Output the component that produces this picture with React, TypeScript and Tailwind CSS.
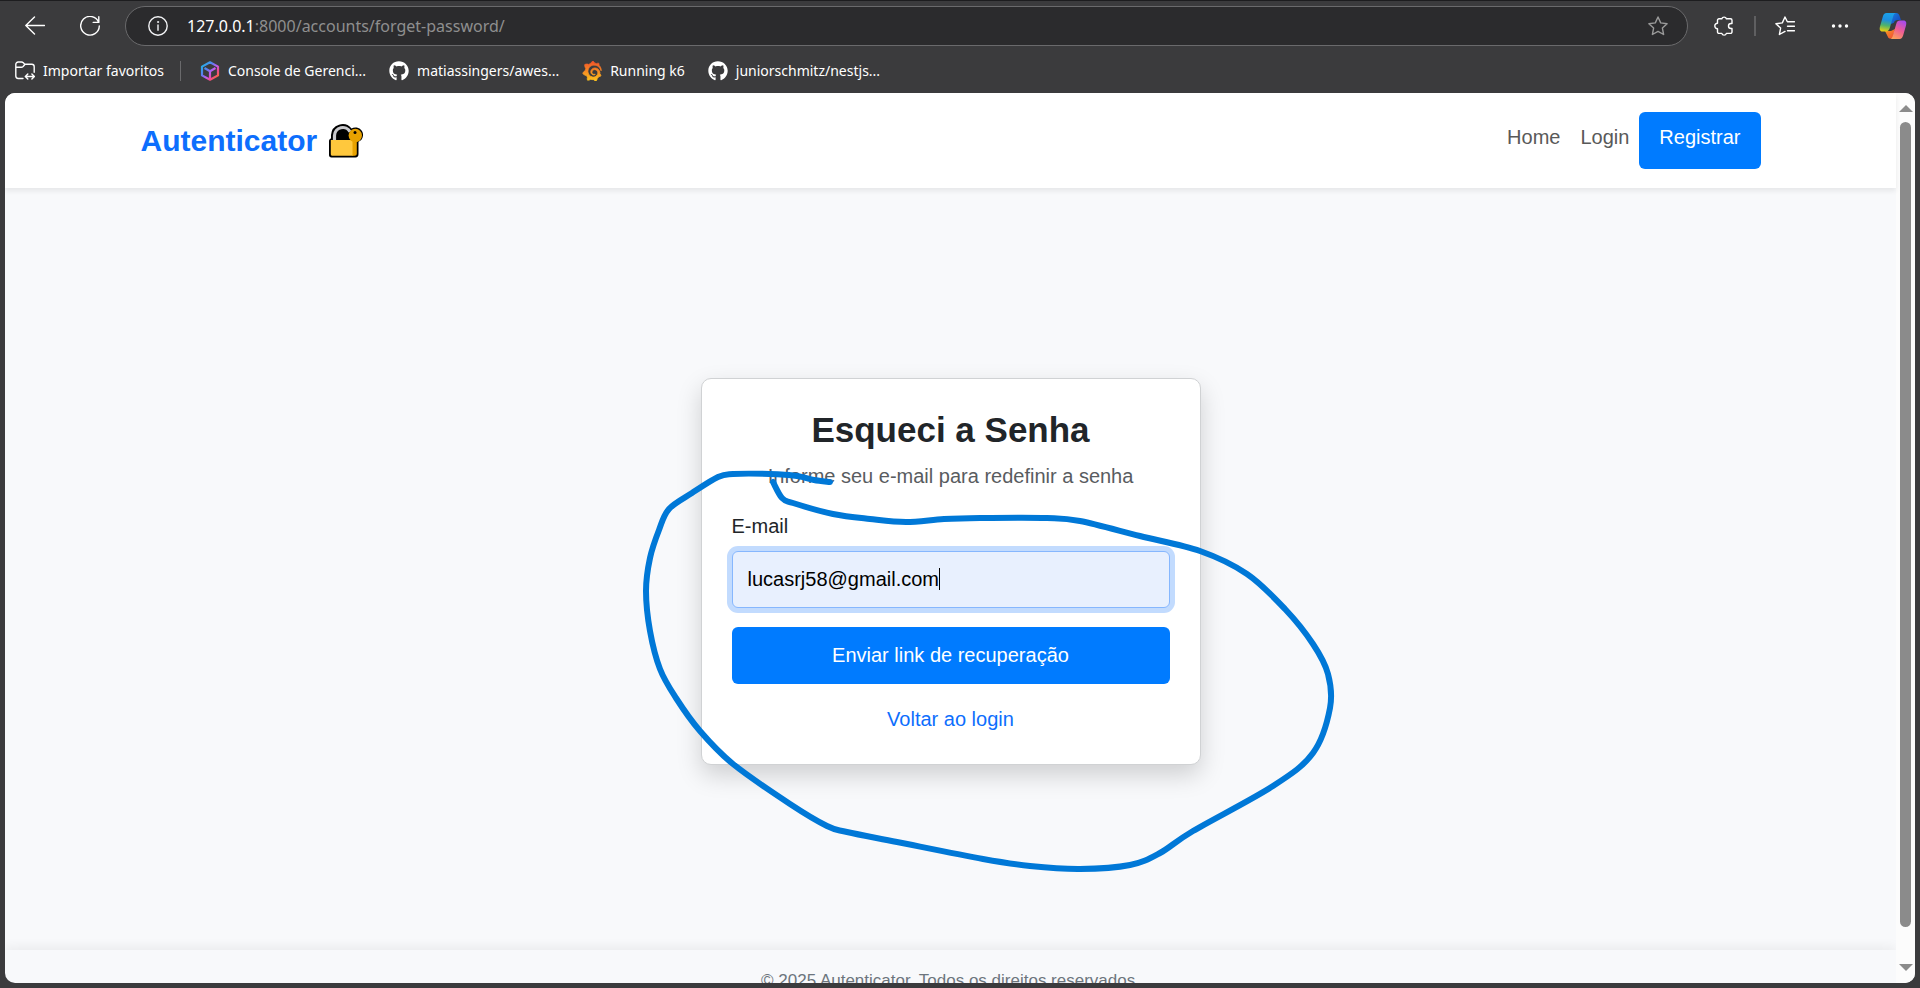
import React, { useState } from "react";
import { FaGithub } from "react-icons/fa";
import { SiGrafana } from "react-icons/si";

type Point = [number, number];

const strokePoints: Point[] = [
  [830, 481], [814, 479], [797, 475], [770, 473], [733, 473], [718, 476], [692, 492], [669, 508],
  [659, 529], [650, 557], [646, 590], [650, 630], [660, 668], [676, 697], [700, 730], [733, 763],
  [790, 803], [827, 825], [847, 831], [897, 841], [983, 858], [1030, 865], [1080, 868], [1130, 864],
  [1160, 852], [1193, 830], [1273, 785], [1313, 752], [1330, 707], [1328, 673], [1313, 643],
  [1285, 608], [1247, 573], [1200, 550], [1140, 535], [1080, 520], [1047, 517], [980, 517],
  [944, 518], [906, 521], [870, 518], [833, 513], [793, 502], [782, 497], [773, 481],
];

function smoothPath(points: Point[]): string {
  let d = `M${points[0][0]} ${points[0][1]}`;
  for (let i = 0; i < points.length - 1; i++) {
    const p0 = points[Math.max(i - 1, 0)];
    const p1 = points[i];
    const p2 = points[i + 1];
    const p3 = points[Math.min(i + 2, points.length - 1)];
    d += `C${p1[0] + (p2[0] - p0[0]) / 6} ${p1[1] + (p2[1] - p0[1]) / 6} ${p2[0] - (p3[0] - p1[0]) / 6} ${
      p2[1] - (p3[1] - p1[1]) / 6
    } ${p2[0]} ${p2[1]}`;
  }
  return d;
}

const line = {
  fill: "none",
  stroke: "currentColor",
  strokeWidth: 1.4,
  strokeLinecap: "round" as const,
  strokeLinejoin: "round" as const,
};

function BackIcon() {
  return (
    <svg className="size-5" viewBox="0 0 20 20" {...line}>
      <path d="M19.5 9.5H.8M9.5 1 .8 9.5l8.7 8.5" />
    </svg>
  );
}

function ReloadIcon() {
  return (
    <svg className="size-5" viewBox="0 0 20 20" {...line}>
      <path d="M18.6 6.2A9.3 9.3 0 1 0 19.3 10M18.8.8v5.6h-5.6" />
    </svg>
  );
}

function InfoIcon() {
  return (
    <svg className="size-5 text-gray-100" viewBox="0 0 20 20" {...line}>
      <circle cx="10" cy="10" r="9.2" />
      <path d="M10 9v5.2" />
      <circle cx="10" cy="6" r="0.6" fill="currentColor" strokeWidth="0.8" />
    </svg>
  );
}

function StarIcon() {
  return (
    <svg className="size-5" viewBox="0 0 20 20" {...line}>
      <path d="m10 1 2.7 5.9 6.4.8-4.7 4.4 1.2 6.4L10 15.4l-5.6 3.1 1.2-6.4L.9 7.7l6.4-.8z" />
    </svg>
  );
}

function PuzzleIcon() {
  return (
    <svg className="size-5" viewBox="0 0 20 20" {...line}>
      <path d="M7.800 2.800a2.400 2.400 0 0 1 4.600 0H16.500a1.500 1.500 0 0 1 1.500 1.500V7.500h-1a2.500 2.500 0 0 0 0 5h1v3.400a1.500 1.500 0 0 1-1.500 1.500h-4.100a2.400 2.400 0 0 1-4.600 0H5a1.500 1.500 0 0 1-1.500-1.500v-3.200a2.700 2.700 0 0 1 0-5.400v-3A1.500 1.500 0 0 1 5 2.800z" />
    </svg>
  );
}

function FavoritesIcon() {
  return (
    <svg className="size-5" viewBox="0 0 20 20" {...line}>
      <path d="M12.200 5.500 10 1 7.300 6.900l-6.400.8 4.700 4.400-1.200 6.400L10 15.400M12.500 5.800h7M12.500 10.300h7M12.500 14.800h7" />
    </svg>
  );
}

function MoreIcon() {
  return (
    <svg className="size-5" viewBox="0 0 20 20" fill="currentColor">
      <circle cx="3.500" cy="10" r="1.700" />
      <circle cx="10" cy="10" r="1.700" />
      <circle cx="16.500" cy="10" r="1.700" />
    </svg>
  );
}

function CopilotIcon() {
  return (
    <svg className="h-7 w-7" viewBox="0 0 28 28">
      <defs>
        <linearGradient id="cp-left" x1="0.300" y1="0" x2="0.150" y2="1">
          <stop offset="0" stopColor="#1aa0e8" />
          <stop offset="0.350" stopColor="#1d8ee0" />
          <stop offset="0.650" stopColor="#4fb36a" />
          <stop offset="1" stopColor="#f5d30a" />
        </linearGradient>
        <linearGradient id="cp-right" x1="0.800" y1="0" x2="0.300" y2="1">
          <stop offset="0" stopColor="#a44af0" />
          <stop offset="0.500" stopColor="#ee5c96" />
          <stop offset="1" stopColor="#fca05a" />
        </linearGradient>
        <linearGradient id="cp-top" x1="0" y1="0" x2="1" y2="1">
          <stop offset="0" stopColor="#1a7fe0" />
          <stop offset="1" stopColor="#1540b8" />
        </linearGradient>
        <linearGradient id="cp-bottom" x1="0" y1="0" x2="1" y2="1">
          <stop offset="0" stopColor="#f8a01c" />
          <stop offset="1" stopColor="#f0443c" />
        </linearGradient>
      </defs>
      <path fill="url(#cp-top)" d="M12 1h5.500c1.500 0 2.400.9 2.900 2.400L22 8h-3.500c-2 0-3 1-3.600 2.800L12 12z" />
      <path fill="url(#cp-bottom)" d="M6 19h6l4-2-2.500 9.500h-2c-1.600 0-2.500-1-3-2.600z" />
      <path
        fill="url(#cp-left)"
        d="M7.500 1H17c-1.500.3-2.300 1.500-2.800 3.300l-3.500 12C10.100 18.300 9 19.500 7 19.500H3.500C.7 19.500.3 17 1 14.500l2.800-9.800C4.500 2.300 5.500 1 7.500 1z"
      />
      <path
        fill="url(#cp-right)"
        d="M20.500 27H11c1.500-.3 2.300-1.500 2.800-3.300l3.500-12c.6-2 1.700-3.200 3.700-3.200h3.500c2.800 0 3.200 2.500 2.500 5l-2.800 9.800c-.7 2.400-1.700 3.700-3.700 3.700z"
      />
    </svg>
  );
}

function ImportIcon() {
  return (
    <svg className="size-5" viewBox="0 0 20 20" {...line}>
      <path d="M8 17.500H3.200A2.400 2.400 0 0 1 .8 15.100V3.400A2.400 2.400 0 0 1 3.200 1h3.300c.8 0 1.300.3 1.800.8l1.400 1.500h7.100a2.400 2.400 0 0 1 2.400 2.400v5.600M.8 6.300h5.500c.8 0 1.300-.3 1.800-.8l1.800-2M10.500 15.500h8.700M12.800 13l-2.500 2.500 2.500 2.500M16.900 13l2.500 2.500-2.500 2.500" />
    </svg>
  );
}

function CubeIcon() {
  return (
    <svg className="size-5" viewBox="0 0 20 20" fill="none" strokeWidth="2.200" strokeLinejoin="round">
      <defs>
        <linearGradient id="cube" x1="2" y1="3" x2="17" y2="17" gradientUnits="userSpaceOnUse">
          <stop offset="0" stopColor="#1cb8e8" />
          <stop offset="0.350" stopColor="#5b7df0" />
          <stop offset="0.600" stopColor="#c45af0" />
          <stop offset="0.800" stopColor="#f04a8a" />
          <stop offset="1" stopColor="#fb6a3c" />
        </linearGradient>
      </defs>
      <path stroke="url(#cube)" d="M10 1.300 18 5.600v8.800l-8 4.300-8-4.300V5.600zM4.500 7 10 10.200 15.500 7M10 10.200v8" />
    </svg>
  );
}

function GrafanaIcon() {
  return (
    <svg className="size-5" viewBox="0 0 20 20">
      <defs>
        <linearGradient id="grafana" x1="0" y1="0" x2="0" y2="1">
          <stop offset="0" stopColor="#f2502a" />
          <stop offset="1" stopColor="#fcc41c" />
        </linearGradient>
      </defs>
      <SiGrafana size={20} fill="url(#grafana)" stroke="url(#grafana)" strokeWidth="1" />
    </svg>
  );
}

function LockIcon() {
  return (
    <svg className="h-9 w-9" viewBox="0 0 36 36">
      <path d="M3 15.500V12a11.500 11.500 0 0 1 20.500-6.500c5-2.500 12 .5 11.500 7-.2 3-2 5.300-4.500 6.200V31c0 2-1 3.500-3 3.500H3.500C1.800 34.500 1 33.500 1 32V18c0-1.200.8-2.200 2-2.500z" />
      <path d="M6.500 17v-4.500a8.300 8.300 0 0 1 15.500-3.800" fill="none" stroke="#c9c9cc" strokeWidth="3.200" />
      <path d="M2.800 17h23v14c0 1-.6 1.800-1.600 1.800H4.400c-1 0-1.600-.8-1.600-1.800z" fill="#ffc83d" />
      <path d="M24.500 18h4.300v12.800c0 1.300-.8 2-2 2h-3.500c1 0 1.200-.8 1.200-1.800z" fill="#e8a200" />
      <circle cx="27.300" cy="12.500" r="6.700" fill="#e8a200" />
      <circle cx="27" cy="9.500" r="1.500" />
    </svg>
  );
}

const bookmarks = [
  { label: "Console de Gerenci...", icon: <CubeIcon /> },
  { label: "matiassingers/awes...", icon: <FaGithub size={20} /> },
  { label: "Running k6", icon: <GrafanaIcon /> },
  { label: "juniorschmitz/nestjs...", icon: <FaGithub size={20} /> },
];

function BrowserBar() {
  return (
    <header className="shrink-0 border-t border-[#1d1d1f] font-['Noto_Sans',sans-serif] text-white">
      <div className="flex items-center pt-[5px] pr-[13px] pl-[25px]">
        <button type="button" aria-label="Voltar" className="mr-[35px]">
          <BackIcon />
        </button>
        <button type="button" aria-label="Recarregar" className="mr-[25px]">
          <ReloadIcon />
        </button>
        <div className="mr-[26px] flex h-10 flex-1 items-center rounded-full border border-[#6a6a6c] bg-[#2b2b2d] pr-[19px] pl-[22px]">
          <InfoIcon />
          <a href="#url" className="ml-[19px] flex-1 text-base text-[#8f8f8f]">
            <span className="text-white">127.0.0.1</span>:8000/accounts/forget-password/
          </a>
          <button type="button" aria-label="Adicionar aos favoritos" className="text-[#9a9a9a]">
            <StarIcon />
          </button>
        </div>
        <button type="button" aria-label="Extensões" className="mr-5">
          <PuzzleIcon />
        </button>
        <span className="mr-[19px] h-5 w-[2px] bg-[#5f5f61]" />
        <button type="button" aria-label="Favoritos" className="mr-[35px]">
          <FavoritesIcon />
        </button>
        <button type="button" aria-label="Mais" className="mr-[29px]">
          <MoreIcon />
        </button>
        <button type="button" aria-label="Copilot">
          <CopilotIcon />
        </button>
      </div>
      <nav aria-label="Favoritos" className="flex h-[47px] items-center pt-[3px] pl-[15px] text-sm">
        <a href="#importar" className="flex items-center gap-2">
          <ImportIcon />
          Importar favoritos
        </a>
        <span className="mr-[19px] ml-4 h-5 w-px bg-[#6a6a6c]" />
        <ul className="flex gap-[23px]">
          {bookmarks.map((b) => (
            <li key={b.label}>
              <a href="#favorito" className="flex items-center gap-2 whitespace-nowrap">
                {b.icon}
                {b.label}
              </a>
            </li>
          ))}
        </ul>
      </nav>
    </header>
  );
}

function SiteHeader() {
  return (
    <header className="relative shrink-0 bg-white shadow-[0_3px_5px_rgba(0,0,0,0.075)]">
      <div className="mx-auto flex h-[95px] max-w-[1650px] items-center justify-between px-[15px]">
        <a href="#home" className="flex items-center gap-[11px] text-[30px] font-bold text-[#0d6efd]">
          Autenticator
          <LockIcon />
        </a>
        <nav aria-label="Principal" className="flex text-xl leading-[30px] text-[#595959]">
          <a href="#home" className="px-[10px] pt-[10px]">
            Home
          </a>
          <a href="#login" className="px-[10px] pt-[10px]">
            Login
          </a>
          <a href="#registrar" className="rounded-md bg-[#007bff] px-5 pt-[10px] pb-[17px] text-white">
            Registrar
          </a>
        </nav>
      </div>
    </header>
  );
}

function ResetCard() {
  const [email, setEmail] = useState("lucasrj58@gmail.com");
  return (
    <section className="relative w-[500px] rounded-[10px] border border-[#d0d2d4] bg-white p-[30px] text-center text-xl leading-[30px] shadow-[0_10px_24px_rgba(0,0,0,0.17)]">
      <h1 className="text-[35px] leading-[42px] font-bold text-[#212529]">Esqueci a Senha</h1>
      <p className="mt-[10px] text-[#595c5f]">Informe seu e-mail para redefinir a senha</p>
      <form onSubmit={(e) => e.preventDefault()}>
        <label htmlFor="email" className="mt-5 block text-left text-[#212529]">
          E-mail
        </label>
        <div className="relative mt-[10px]">
          <input
            id="email"
            type="email"
            value={email}
            onChange={(e) => setEmail(e.target.value)}
            className="block h-[57px] w-full rounded-md border border-[#86b7fe] bg-[#e8f0fe] px-[15px] text-black caret-transparent ring-[5px] ring-[#c2dbfe] outline-none"
          />
          <span className="absolute top-[17px] left-[207px] h-[22px] w-px bg-black" />
        </div>
        <button type="submit" className="mt-[19px] h-[57px] w-full rounded-md bg-[#007bff] text-white">
          Enviar link de recuperação
        </button>
      </form>
      <a href="#login" className="mt-5 block text-[#0d6efd]">
        Voltar ao login
      </a>
      <svg
        className="pointer-events-none absolute top-[82px] left-[-62px] h-[420px] w-[700px]"
        viewBox="640 460 700 420"
        fill="none"
        stroke="#0078d7"
        strokeWidth="6"
        strokeLinecap="round"
        strokeLinejoin="round"
      >
        <path d={smoothPath(strokePoints)} />
      </svg>
    </section>
  );
}

function Scrollbar() {
  return (
    <div aria-hidden="true" className="flex w-[19px] shrink-0 flex-col items-center bg-[#fcfcfc] pt-3 pb-3">
      <svg className="h-[7px] w-[14px] shrink-0" viewBox="0 0 14 7" fill="#8b8b8b">
        <path d="M7 0l7 7H0z" />
      </svg>
      <span className="mt-[10px] mb-[37px] w-[11px] flex-1 rounded-full bg-[#8b8b8b]" />
      <svg className="h-[7px] w-[14px] shrink-0" viewBox="0 0 14 7" fill="#8b8b8b">
        <path d="M7 7L0 0h14z" />
      </svg>
    </div>
  );
}

export default function App() {
  return (
    <div className="flex h-screen flex-col bg-[#3b3b3d] font-['Liberation_Sans',Arial,sans-serif]">
      <BrowserBar />
      <div className="mx-[5px] mb-[5px] flex min-h-0 flex-1 overflow-hidden rounded-[10px] bg-[#f8f9fb]">
        <div className="flex min-w-0 flex-1 flex-col">
          <SiteHeader />
          <main className="flex flex-1 items-center justify-center pt-1">
            <ResetCard />
          </main>
          <footer className="h-[33px] shrink-0 pt-[18px] text-center text-[17px] leading-[26px] text-[#6c757d] shadow-[0_-3px_12px_rgba(0,0,0,0.06)]">
            © 2025 Autenticator. Todos os direitos reservados.
          </footer>
        </div>
        <Scrollbar />
      </div>
    </div>
  );
}
